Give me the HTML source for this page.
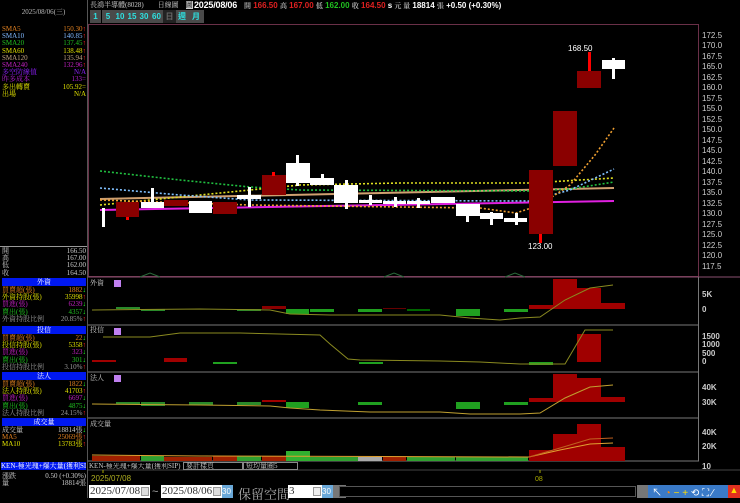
<!DOCTYPE html>
<html><head><meta charset="utf-8"><style>
*{margin:0;padding:0;box-sizing:border-box}
body{width:740px;height:498px;background:#000;overflow:hidden;position:relative;font-family:"Liberation Sans","Noto Sans CJK TC",sans-serif;color:#ccc}
.a{position:absolute;white-space:nowrap}
.lp{font-family:"Liberation Serif","Noto Serif CJK SC",serif;font-size:7px;line-height:7px}
.hd{position:absolute;left:2px;width:84px;height:8px;background:#0018f0;color:#fff;font-size:7px;line-height:8px;text-align:center;font-family:"Liberation Serif","Noto Serif CJK SC",serif}
.btn{position:absolute;top:10px;height:13px;background:#4a4a4a;color:#2ee0e0;font-size:8px;line-height:13px;text-align:center;font-weight:bold}
.inp{position:absolute;top:485px;height:13px;background:#fff;color:#333;font-size:11px;line-height:13px;font-family:"Liberation Serif",serif;padding-left:1px;overflow:hidden}
.dd{position:absolute;top:2px;right:1px;width:8px;height:9px;background:#ddd;border:1px solid #999}
</style></head><body>
<div class="a lp" style="left:0;width:87px;top:9px;text-align:center;color:#bbb">2025/08/06(三)</div>
<div class="a" style="left:87px;top:0;width:1px;height:498px;background:#555"></div>
<div class="a lp" style="left:2px;top:26px;line-height:7.2px">
<div style="color:#e08020">SMA5</div><div style="color:#80b8ff">SMA10</div><div style="color:#20c020">SMA20</div><div style="color:#e0e000">SMA60</div><div style="color:#c0a080">SMA120</div><div style="color:#c020c0">SMA240</div><div style="color:#9020ff">多空防線值</div><div style="color:#b020d0">昨多成本</div><div style="color:#e0e000">多出轉賣</div><div style="color:#e0e000">出場</div></div>
<div class="a lp" style="left:40px;width:46px;top:26px;line-height:7.2px;text-align:right">
<div style="color:#e08020">150.30<span style="color:#f22">↑</span></div><div style="color:#80b8ff">140.85<span style="color:#f22">↑</span></div><div style="color:#20c020">137.45<span style="color:#f22">↑</span></div><div style="color:#e0e000">138.48<span style="color:#f22">↑</span></div><div style="color:#c0a080">135.94<span style="color:#f22">↑</span></div><div style="color:#c020c0">132.96<span style="color:#f22">↑</span></div><div style="color:#9020ff">N/A</div><div style="color:#b020d0">133=</div><div style="color:#e0e000">105.92=</div><div style="color:#e0e000">N/A</div></div>
<div class="a" style="left:0;top:246px;width:87px;height:1px;background:#999"></div>
<div class="a lp" style="left:2px;top:248px;line-height:7.2px;color:#ccc"><div>開</div><div>高</div><div>低</div><div>收</div></div>
<div class="a lp" style="left:40px;width:46px;top:248px;line-height:7.2px;text-align:right;color:#ccc"><div>166.50</div><div>167.00</div><div>162.00</div><div>164.50</div></div>

<div class="hd" style="top:278px">外資</div>
<div class="a lp" style="left:2px;top:287px;line-height:7.2px"><div style="color:#e08020">買賣超(張)</div><div style="color:#e0e000">外資持股(張)</div><div style="color:#c020c0">買進(張)</div><div style="color:#20c020">賣出(張)</div><div style="color:#999">外資持股比例</div></div>
<div class="a lp" style="left:40px;width:46px;top:287px;line-height:7.2px;text-align:right"><div style="color:#e08020">1882<span style="color:#2f2">↓</span></div><div style="color:#e0e000">35998<span style="color:#f22">↑</span></div><div style="color:#c020c0">6239<span style="color:#2f2">↓</span></div><div style="color:#20c020">4357<span style="color:#2f2">↓</span></div><div style="color:#999">20.85%<span style="color:#f22">↑</span></div></div>
<div class="hd" style="top:326px">投信</div>
<div class="a lp" style="left:2px;top:335px;line-height:7.2px"><div style="color:#e08020">買賣超(張)</div><div style="color:#e0e000">投信持股(張)</div><div style="color:#c020c0">買進(張)</div><div style="color:#20c020">賣出(張)</div><div style="color:#999">投信持股比例</div></div>
<div class="a lp" style="left:40px;width:46px;top:335px;line-height:7.2px;text-align:right"><div style="color:#e08020">22<span style="color:#2f2">↓</span></div><div style="color:#e0e000">5358<span style="color:#f22">↑</span></div><div style="color:#c020c0">323<span style="color:#2f2">↓</span></div><div style="color:#20c020">301<span style="color:#2f2">↓</span></div><div style="color:#999">3.10%<span style="color:#f22">↑</span></div></div>
<div class="hd" style="top:372px">法人</div>
<div class="a lp" style="left:2px;top:381px;line-height:7.2px"><div style="color:#e08020">買賣超(張)</div><div style="color:#e0e000">法人持股(張)</div><div style="color:#c020c0">買進(張)</div><div style="color:#20c020">賣出(張)</div><div style="color:#999">法人持股比例</div></div>
<div class="a lp" style="left:40px;width:46px;top:381px;line-height:7.2px;text-align:right"><div style="color:#e08020">1822<span style="color:#2f2">↓</span></div><div style="color:#e0e000">41703<span style="color:#f22">↑</span></div><div style="color:#c020c0">6697<span style="color:#2f2">↓</span></div><div style="color:#20c020">4875<span style="color:#2f2">↓</span></div><div style="color:#999">24.15%<span style="color:#f22">↑</span></div></div>
<div class="hd" style="top:418px">成交量</div>
<div class="a lp" style="left:2px;top:427px;line-height:7.2px"><div style="color:#ccc">成交量</div><div style="color:#e08020">MA5</div><div style="color:#e0e000">MA10</div></div>
<div class="a lp" style="left:40px;width:46px;top:427px;line-height:7.2px;text-align:right"><div style="color:#ccc">18814張<span style="color:#2f2">↓</span></div><div style="color:#e08020">25069張<span style="color:#f22">↑</span></div><div style="color:#e0e000">13783張<span style="color:#f22">↑</span></div></div>
<div class="a lp" style="left:1px;top:462px;width:85px;height:8px;background:#0018f0;color:#fff;line-height:8px;overflow:hidden">KEN-極光瑰+爆大量(獲利SIP)</div>
<div class="a lp" style="left:2px;top:473px;line-height:7.2px;color:#ccc"><div>漲跌</div><div>量</div></div>
<div class="a lp" style="left:30px;width:56px;top:473px;line-height:7.2px;text-align:right;color:#ccc"><div>0.50 (+0.30%)</div><div>18814張</div></div>

<div class="a lp" style="left:90px;top:2px;color:#ccc">長鴻半導體(8028)　　日線圖　<span style="background:#ccc;color:#000">圖</span></div>
<div class="a" style="left:194px;top:0px;font-size:9px;font-weight:bold;color:#fff;letter-spacing:-0.2px">2025/08/06</div>
<div class="a" style="left:244px;top:1px;font-size:8px;font-weight:bold;color:#fff"><span class="lp" style="color:#aaa">開</span> <span style="color:#e02020">166.50</span> <span class="lp" style="color:#aaa">高</span> <span style="color:#e02020">167.00</span> <span class="lp" style="color:#aaa">低</span> <span style="color:#20c020">162.00</span> <span class="lp" style="color:#aaa">收</span> <span style="color:#e02020">164.50</span> s <span class="lp" style="color:#aaa">元 量</span> 18814 <span class="lp" style="color:#aaa">張</span> +0.50 (+0.30%)</div>
<div class="btn" style="left:90px;width:11px">1</div><div class="btn" style="left:102px;width:12px">5</div><div class="btn" style="left:114px;width:12px">10</div><div class="btn" style="left:126px;width:12px">15</div><div class="btn" style="left:138px;width:12px">30</div><div class="btn" style="left:150px;width:13px">60</div><div class="btn" style="left:163px;width:13px;background:#222;color:#666">日</div><div class="btn" style="left:176px;width:12px">週</div><div class="btn" style="left:188px;width:16px">月</div>

<svg class="a" style="left:0;top:0" width="740" height="498" viewBox="0 0 740 498">
<g fill="none">
<rect x="88.5" y="24.5" width="610" height="252" stroke="#6a3048"/>
<line x1="88" y1="277" x2="740" y2="277" stroke="#8a5070"/>
<line x1="88" y1="325" x2="699" y2="325" stroke="#777"/>
<line x1="88" y1="372" x2="699" y2="372" stroke="#777"/>
<line x1="88" y1="418" x2="699" y2="418" stroke="#777"/>
<line x1="88" y1="461" x2="699" y2="461" stroke="#777"/>
<line x1="698.5" y1="277" x2="698.5" y2="461" stroke="#777"/>
<line x1="88" y1="470" x2="740" y2="470" stroke="#444"/>
</g>
<g font-family="Liberation Sans" font-size="8" fill="#ccc">
<text x="702" y="38">172.5</text><text x="702" y="48">170.0</text><text x="702" y="59">167.5</text><text x="702" y="69">165.0</text><text x="702" y="80">162.5</text><text x="702" y="90">160.0</text><text x="702" y="101">157.5</text><text x="702" y="111">155.0</text><text x="702" y="122">152.5</text><text x="702" y="132">150.0</text><text x="702" y="143">147.5</text><text x="702" y="153">145.0</text><text x="702" y="164">142.5</text><text x="702" y="174">140.0</text><text x="702" y="185">137.5</text><text x="702" y="195">135.0</text><text x="702" y="206">132.5</text><text x="702" y="216">130.0</text><text x="702" y="227">127.5</text><text x="702" y="237">125.0</text><text x="702" y="248">122.5</text><text x="702" y="258">120.0</text><text x="702" y="269">117.5</text>
<g font-weight="bold"><text x="702" y="297">5K</text><text x="702" y="312">0</text><text x="702" y="339">1500</text><text x="702" y="347">1000</text><text x="702" y="356">500</text><text x="702" y="364">0</text><text x="702" y="390">40K</text><text x="702" y="405">30K</text><text x="702" y="435">40K</text><text x="702" y="449">20K</text><text x="702" y="469">10</text></g>
<text x="568" y="51" fill="#fff">168.50</text><text x="528" y="249" fill="#fff">123.00</text>
</g>
<g fill="none" stroke-width="1.6">
<polyline points="100,199 614,188" stroke="#d0a070" stroke-width="2"/>
<polyline points="100,210 614,201" stroke="#e020e0" stroke-width="2"/>
<polyline points="100,171 180,180 250,187 300,190 530,191 570,189 614,182" stroke="#20c040" stroke-dasharray="2,2"/>
<polyline points="100,205 200,195 300,185 400,183 530,183 614,178" stroke="#e0e020" stroke-dasharray="2,2"/>
<polyline points="100,188 180,195 250,200 530,201 570,190 614,169" stroke="#80c0ff" stroke-dasharray="2,2"/>
<polyline points="100,200 250,205 400,207 480,208 516,213 540,205 570,185 595,155 614,128" stroke="#f0a030" stroke-dasharray="2,2"/>
</g>
<g>
<rect x="102" y="208" width="3" height="19" fill="#fff"/>
<rect x="116" y="202" width="23" height="15" fill="#8a0000"/><rect x="126" y="217" width="3" height="3" fill="#f00"/>
<rect x="151" y="188" width="3" height="20" fill="#fff"/><rect x="141" y="202" width="23" height="6" fill="#fff"/>
<rect x="164" y="200" width="24" height="6" fill="#8a0000"/>
<rect x="189" y="201" width="23" height="12" fill="#fff"/>
<rect x="213" y="202" width="24" height="12" fill="#8a0000"/>
<rect x="248" y="187" width="3" height="20" fill="#fff"/><rect x="237" y="195" width="24" height="4" fill="#fff"/>
<rect x="262" y="175" width="24" height="20" fill="#8a0000"/><rect x="272" y="172" width="3" height="4" fill="#f00"/>
<rect x="296" y="155" width="3" height="31" fill="#fff"/><rect x="286" y="163" width="24" height="20" fill="#fff"/>
<rect x="321" y="174" width="3" height="11" fill="#fff"/><rect x="310" y="178" width="24" height="7" fill="#fff"/>
<rect x="345" y="180" width="3" height="29" fill="#fff"/><rect x="334" y="185" width="24" height="18" fill="#fff"/>
<rect x="369" y="195" width="3" height="10" fill="#fff"/><rect x="359" y="200" width="23" height="3" fill="#fff"/>
<rect x="394" y="197" width="3" height="10" fill="#fff"/><rect x="383" y="201" width="23" height="3" fill="#fff"/>
<rect x="417" y="198" width="3" height="10" fill="#fff"/><rect x="407" y="201" width="23" height="3" fill="#fff"/>
<rect x="431" y="197" width="24" height="6" fill="#fff"/>
<rect x="466" y="204" width="3" height="18" fill="#fff"/><rect x="456" y="204" width="24" height="12" fill="#fff"/>
<rect x="490" y="212" width="3" height="13" fill="#fff"/><rect x="480" y="213" width="23" height="6" fill="#fff"/>
<rect x="515" y="213" width="3" height="12" fill="#fff"/><rect x="504" y="218" width="23" height="4" fill="#fff"/>
<rect x="529" y="170" width="24" height="64" fill="#8a0000"/><rect x="539" y="234" width="3" height="9" fill="#f00"/>
<rect x="553" y="111" width="24" height="55" fill="#8a0000"/>
<rect x="588" y="52" width="3" height="20" fill="#f00"/><rect x="577" y="71" width="24" height="17" fill="#8a0000"/>
<rect x="612" y="58" width="3" height="21" fill="#fff"/><rect x="602" y="60" width="23" height="9" fill="#fff"/>
<polyline points="140,277 150,273 160,277" fill="none" stroke="#2a6a3a"/><polyline points="384,277 394,273 404,277" fill="none" stroke="#2a6a3a"/><polyline points="505,277 515,273 525,277" fill="none" stroke="#2a6a3a"/>
</g>
<g font-family="Liberation Serif,Noto Serif CJK SC" font-size="7" fill="#ccc"><text x="90" y="285">外資</text><text x="90" y="332">投信</text><text x="90" y="380">法人</text><text x="90" y="426">成交量</text></g>
<rect x="114" y="280" width="7" height="7" fill="#c080f0"/><rect x="114" y="328" width="7" height="7" fill="#c080f0"/><rect x="114" y="375" width="7" height="7" fill="#c080f0"/>
<g>
<rect x="116" y="307" width="24" height="2" fill="#2a8a2a"/><rect x="141" y="309" width="24" height="2" fill="#2a8a2a"/><rect x="237" y="309" width="24" height="2" fill="#2a8a2a"/><rect x="262" y="306" width="24" height="3" fill="#8a0000"/><rect x="286" y="309" width="23" height="5" fill="#20a020"/><rect x="310" y="309" width="24" height="3" fill="#20a020"/><rect x="358" y="309" width="24" height="3" fill="#20a020"/><rect x="383" y="308" width="23" height="1" fill="#600"/><rect x="407" y="309" width="23" height="2" fill="#060"/>
<rect x="456" y="309" width="24" height="7" fill="#20a020"/><rect x="504" y="309" width="24" height="3" fill="#20a020"/>
<rect x="529" y="305" width="24" height="4" fill="#a00000"/><rect x="553" y="279" width="24" height="30" fill="#a00000"/><rect x="577" y="288" width="24" height="21" fill="#a00000"/><rect x="601" y="303" width="24" height="6" fill="#a00000"/>
<polyline points="92,310 200,309 270,310 290,314 330,315 440,315 470,318 500,320 520,318 540,317 565,300 590,288 613,285" fill="none" stroke="#8a8a20"/>
<rect x="92" y="360" width="24" height="2" fill="#a00000"/><rect x="164" y="358" width="23" height="4" fill="#a00000"/><rect x="213" y="362" width="24" height="2" fill="#20a020"/><rect x="359" y="362" width="24" height="2" fill="#20a020"/><rect x="529" y="362" width="24" height="3" fill="#20a020"/><rect x="577" y="334" width="24" height="28" fill="#a00000"/>
<polyline points="103,337 150,337 180,333 240,333 320,335 330,344 348,359 360,360 440,361 480,362 520,364 565,364 585,330 613,330" fill="none" stroke="#8a8a20"/>
<rect x="116" y="402" width="24" height="2" fill="#2a8a2a"/><rect x="141" y="402" width="24" height="4" fill="#2a8a2a"/><rect x="189" y="402" width="24" height="3" fill="#2a8a2a"/><rect x="237" y="402" width="24" height="3" fill="#2a8a2a"/><rect x="262" y="400" width="24" height="2" fill="#a00000"/><rect x="286" y="402" width="23" height="6" fill="#20a020"/><rect x="358" y="402" width="24" height="3" fill="#20a020"/>
<rect x="456" y="402" width="24" height="7" fill="#20a020"/><rect x="504" y="402" width="24" height="3" fill="#20a020"/>
<rect x="529" y="398" width="24" height="4" fill="#a00000"/><rect x="553" y="374" width="24" height="28" fill="#a00000"/><rect x="577" y="378" width="24" height="24" fill="#a00000"/><rect x="601" y="397" width="24" height="5" fill="#a00000"/>
<polyline points="92,404 200,405 270,406 290,408 320,410 370,412 440,412 470,414 520,414 540,413 565,398 590,387 613,385" fill="none" stroke="#c0a030"/>
<rect x="92" y="456" width="48" height="5" fill="#a02000"/><rect x="141" y="456" width="23" height="5" fill="#30a030"/><rect x="164" y="457" width="48" height="4" fill="#a02000"/><rect x="213" y="456" width="24" height="5" fill="#a02000"/><rect x="237" y="456" width="24" height="5" fill="#30a030"/><rect x="262" y="456" width="24" height="5" fill="#a02000"/><rect x="286" y="451" width="24" height="10" fill="#30b030"/><rect x="310" y="457" width="48" height="4" fill="#30a030"/><rect x="358" y="457" width="24" height="4" fill="#aaa"/><rect x="383" y="457" width="23" height="4" fill="#a02000"/><rect x="407" y="457" width="48" height="4" fill="#30a030"/><rect x="456" y="457" width="24" height="4" fill="#30a030"/><rect x="480" y="457" width="48" height="4" fill="#30a030"/>
<rect x="529" y="450" width="24" height="11" fill="#a00000"/><rect x="553" y="434" width="24" height="27" fill="#a00000"/><rect x="577" y="424" width="24" height="37" fill="#a00000"/><rect x="601" y="447" width="24" height="14" fill="#a00000"/>
<polyline points="92,455 200,456 529,457 560,450 590,444 613,443" fill="none" stroke="#e0a030"/><polyline points="529,457 560,448 590,439 613,438" fill="none" stroke="#c06020"/>
</g>
<line x1="540" y1="470" x2="540" y2="473" stroke="#aa0"/><text x="535" y="481" font-size="7" fill="#aa0" font-family="Liberation Sans">08</text>
<line x1="103" y1="470" x2="103" y2="473" stroke="#aa0"/>
</svg>
<div class="a lp" style="left:89px;top:463px;color:#ccc;width:93px;overflow:hidden">KEN-極光瑰+爆大量(獲利SIP)</div>
<div class="a lp" style="left:183px;top:462px;width:60px;height:8px;border:1px solid #888;color:#ccc;padding-left:2px">要計樣頁</div>
<div class="a lp" style="left:243px;top:462px;width:55px;height:8px;border:1px solid #888;color:#ccc;padding-left:2px">短均量圈5</div>
<div class="a" style="left:91px;top:474px;font-size:8px;color:#b0b020">2025/07/08</div>
<div class="inp" style="left:89px;width:61px">2025/07/08<div class="dd"></div></div>
<div class="a" style="left:152px;top:486px;font-size:11px;color:#aaa">~</div>
<div class="inp" style="left:161px;width:61px">2025/08/06<div class="dd"></div></div>
<div class="a" style="left:222px;top:485px;width:11px;height:13px;background:#6aa8d8;color:#fff;font-size:8px;line-height:13px">30</div>
<div class="a" style="left:238px;top:484px;font-size:13px;color:#aaa;font-family:'Liberation Serif','Noto Serif CJK SC',serif">保留空間</div>
<div class="inp" style="left:288px;width:34px">3<div class="dd" style="background:#eee"></div></div>
<div class="a" style="left:322px;top:485px;width:11px;height:13px;background:#6aa8d8;color:#fff;font-size:8px;line-height:13px">30</div>
<div class="a" style="left:333px;top:485px;width:13px;height:13px;background:#777"></div>
<div class="a" style="left:339px;top:486px;width:297px;height:11px;background:#000;border:1px solid #555"></div>
<div class="a" style="left:637px;top:485px;width:11px;height:13px;background:#777"></div>
<div class="a" style="left:648px;top:485px;width:80px;height:13px;background:#3a7ac8"></div>
<div class="a" style="left:652px;top:484px;font-size:10px;color:#fff">↖ <span style="color:#f80">◔</span> <span style="color:#fd0">− +</span> ⟲ ⛶ ∕</div>
<div class="a" style="left:728px;top:485px;width:12px;height:13px;background:#e03020;color:#fd0;font-size:9px;text-align:center">▲</div>
</body></html>
